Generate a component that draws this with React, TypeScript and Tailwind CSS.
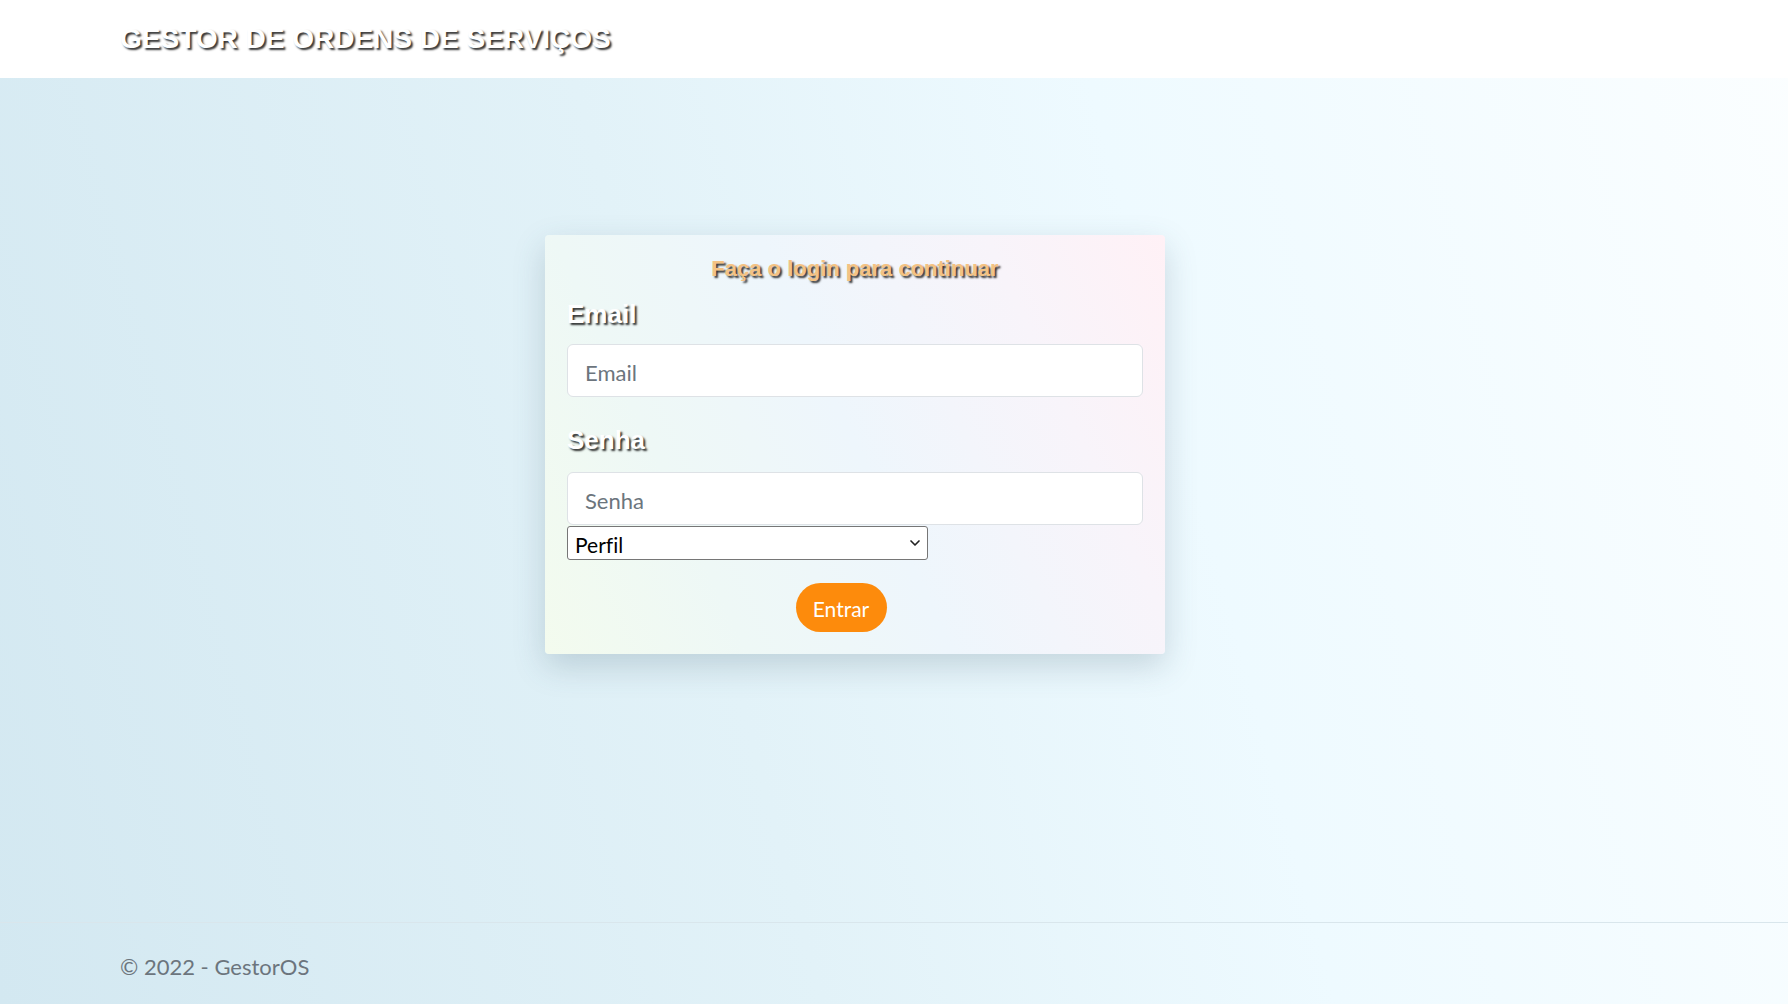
import { ChevronDown } from 'lucide-react'

const shadowText = '[text-shadow:2px_2px_2px_rgba(0,0,0,0.8)]'

export default function App() {
  return (
    <div className="min-h-screen flex flex-col bg-[linear-gradient(75deg,#d3e8f1_0%,#e2f2f8_40%,#eefaff_65%,#fbfeff_100%)] font-['Lato',sans-serif]">
      <header className="h-[78px] bg-white flex items-center px-[120px]">
        <h1 className={`font-['Liberation_Sans',Arial,sans-serif] font-bold text-[28px] leading-none text-white ${shadowText}`}>
          GESTOR DE ORDENS DE SERVIÇOS
        </h1>
      </header>

      <main className="flex-1 flex justify-center pt-[157px] pr-[78px]">
        <div className="w-[620px] h-fit rounded-[4px] px-[22px] pt-[20px] pb-[22px] bg-[linear-gradient(65deg,#f3fbee_0%,#eef8f6_25%,#eef6fc_50%,#f8f4fa_78%,#fff1f6_100%)] shadow-[0_12px_32px_rgba(60,90,110,0.22)]">
          <p className={`text-center font-['Liberation_Sans',Arial,sans-serif] font-bold text-[22px] leading-[28px] text-[#f4c283] ${shadowText}`}>
            Faça o login para continuar
          </p>

          <label className={`block mt-[15px] mb-[14px] font-['Liberation_Sans',Arial,sans-serif] font-bold text-[26px] leading-[32px] text-white ${shadowText}`}>
            Email
          </label>
          <input
            type="email"
            placeholder="Email"
            className="block w-full h-[53px] rounded-[6px] border border-[#dee2e6] bg-white px-[17px] pt-[3px] text-[22px] text-[#212529] placeholder:text-[#6c757d] outline-none"
          />

          <label className={`block mt-[27px] mb-[16px] font-['Liberation_Sans',Arial,sans-serif] font-bold text-[26px] leading-[32px] text-white ${shadowText}`}>
            Senha
          </label>
          <input
            type="password"
            placeholder="Senha"
            className="block w-full h-[53px] rounded-[6px] border border-[#dee2e6] bg-white px-[17px] pt-[3px] text-[22px] text-[#212529] placeholder:text-[#6c757d] outline-none"
          />

          <div className="relative mt-[1px] w-[361px]">
            <select className="block w-full h-[34px] appearance-none rounded-[3px] border border-[#767676] bg-white pl-[7px] pt-[2px] text-[21px] text-black outline-none [font-variant-ligatures:none]">
              <option>Perfil</option>
            </select>
            <ChevronDown size={16} strokeWidth={2.5} className="absolute right-[5px] top-[9px] text-[#222] pointer-events-none" />
          </div>

          <div className="flex justify-center mt-[23px] pr-[28px]">
            <button className="h-[49px] w-[91px] rounded-full bg-[#fd8b0c] text-white text-[21px] pt-[2px]">
              Entrar
            </button>
          </div>
        </div>
      </main>

      <footer className="h-[82px] border-t border-[#d9e6ec] px-[120px] pt-[27px]">
        <p className="text-[22px] leading-[33px] text-[#6c757d]">© 2022 - GestorOS</p>
      </footer>
    </div>
  )
}
